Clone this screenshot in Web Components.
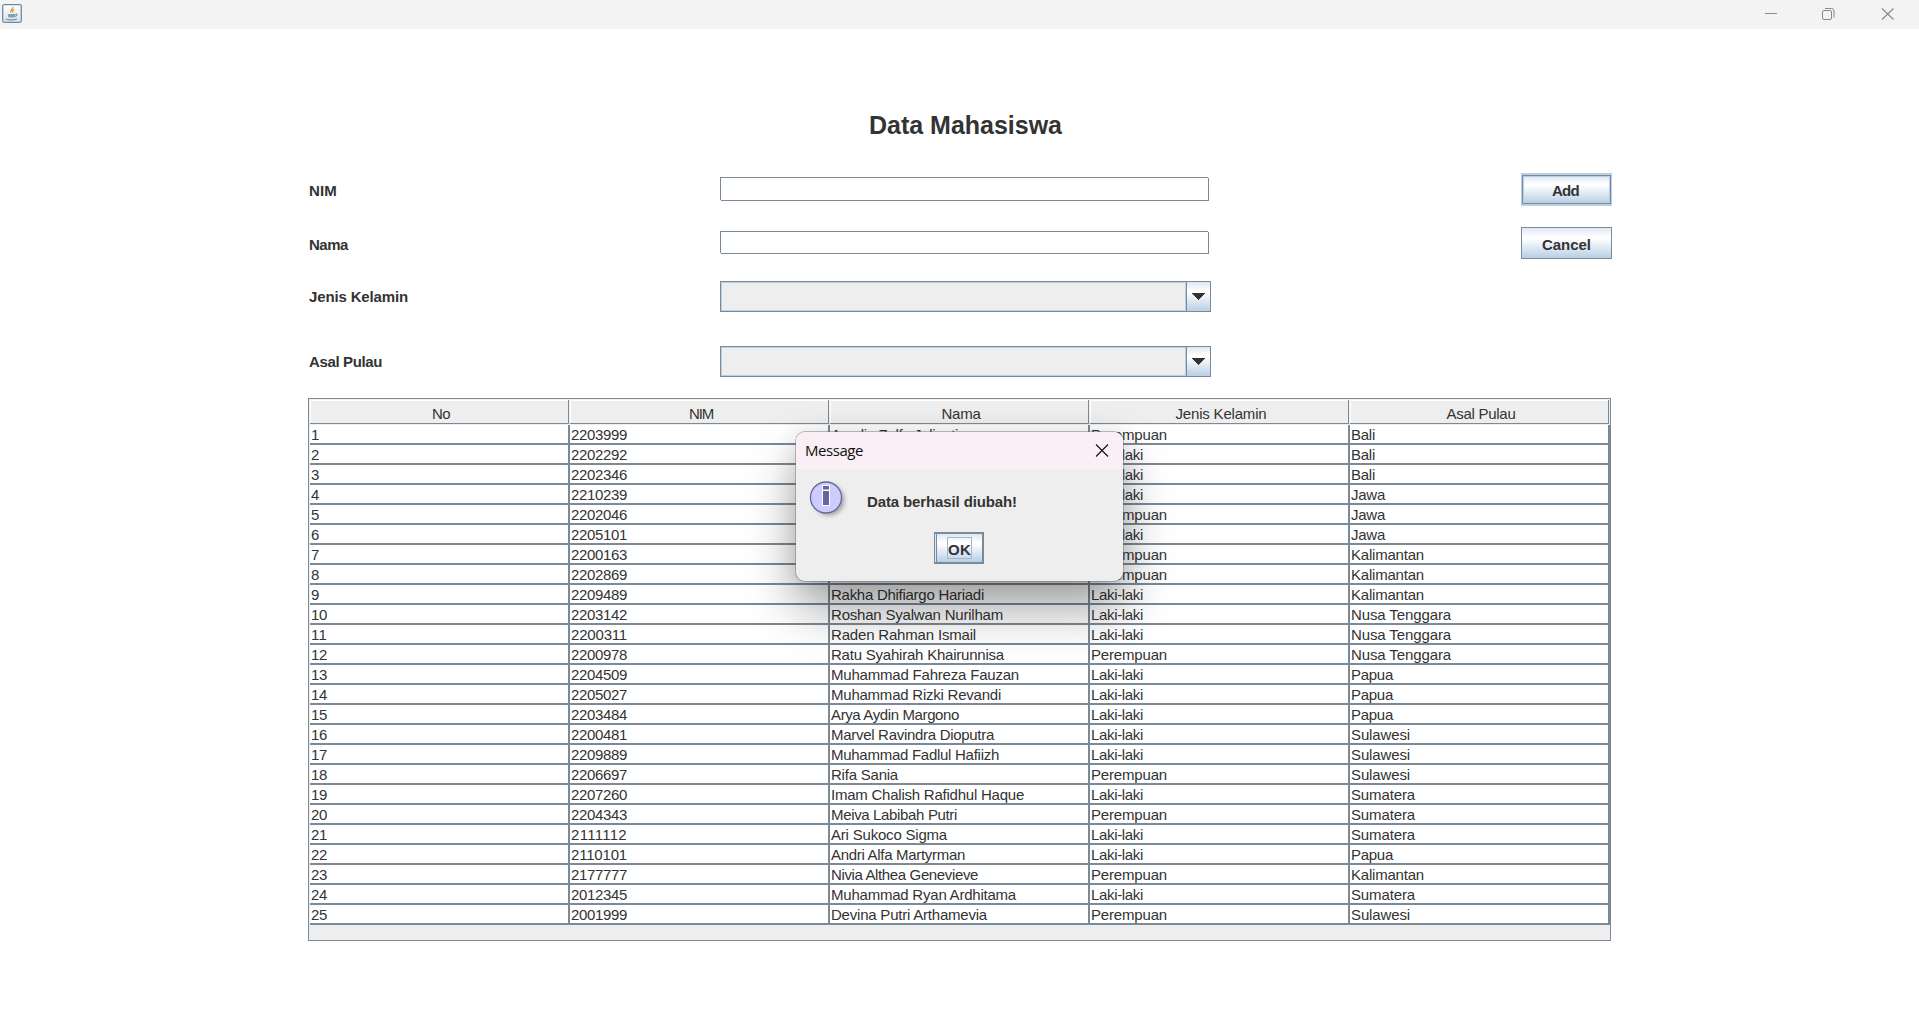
<!DOCTYPE html>
<html lang="id"><head><meta charset="utf-8"><title>Data Mahasiswa</title>
<style>
html,body{margin:0;height:100%;background:#fff;overflow:hidden}
body{font:15px "Liberation Sans",Arial,sans-serif;color:#333}
</style></head><body>
<student-app></student-app>
<script>
// nim | name | name width in px | gender | island
const STUDENTS=`
2203999|Amelia Zulfa Julianti|127|Perempuan|Bali
2202292||0|Laki-laki|Bali
2202346||0|Laki-laki|Bali
2210239||0|Laki-laki|Jawa
2202046||0|Perempuan|Jawa
2205101||0|Laki-laki|Jawa
2200163||0|Perempuan|Kalimantan
2202869||0|Perempuan|Kalimantan
2209489|Rakha Dhifiargo Hariadi|153|Laki-laki|Kalimantan
2203142|Roshan Syalwan Nurilham|172|Laki-laki|Nusa Tenggara
2200311|Raden Rahman Ismail|145|Laki-laki|Nusa Tenggara
2200978|Ratu Syahirah Khairunnisa|173|Perempuan|Nusa Tenggara
2204509|Muhammad Fahreza Fauzan|188|Laki-laki|Papua
2205027|Muhammad Rizki Revandi|170|Laki-laki|Papua
2203484|Arya Aydin Margono|128|Laki-laki|Papua
2200481|Marvel Ravindra Dioputra|163|Laki-laki|Sulawesi
2209889|Muhammad Fadlul Hafiizh|168|Laki-laki|Sulawesi
2206697|Rifa Sania|67|Perempuan|Sulawesi
2207260|Imam Chalish Rafidhul Haque|193|Laki-laki|Sumatera
2204343|Meiva Labibah Putri|126|Perempuan|Sumatera
2111112|Ari Sukoco Sigma|116|Laki-laki|Sumatera
2110101|Andri Alfa Martyrman|134|Laki-laki|Papua
2177777|Nivia Althea Genevieve|147|Perempuan|Kalimantan
2012345|Muhammad Ryan Ardhitama|185|Laki-laki|Sumatera
2001999|Devina Putri Arthamevia|156|Perempuan|Sulawesi`;

const define=(name,html,setup)=>customElements.define(name,class extends HTMLElement{
  connectedCallback(){
    if(this.shadowRoot)return;
    const t=document.createElement('template');t.innerHTML=html;
    const r=this.attachShadow({mode:'open'});r.append(t.content.cloneNode(true));
    if(setup)setup(this,r);
  }
});

define('title-bar',`<style>
:host{display:flex;height:29px;background:#f3f3f3;justify-content:space-between}
svg{display:block}
.c{display:flex}
</style>
<svg width="24" height="29" viewBox="0 0 24 29"><defs><linearGradient id="g" x2="0" y2="1"><stop stop-color="#fff"/><stop offset="1" stop-color="#dfe3e8"/></linearGradient></defs>
<rect x="2.700" y="4.700" width="18.600" height="17.600" rx="1.500" fill="url(#g)" stroke="#6a8ba6" stroke-width="1.300"/>
<path d="M12.700 7c1.200 2-3.400 3-2 5.500M14 9.500c-2 1-1.700 1.600-.8 3" fill="none" stroke="#ee9a4d" stroke-width="1.500"/>
<path d="M7.500 14h8l-1 3.500h-6z" fill="#7f9fba"/><path d="M15.500 14.200c2.500-.5 1.500 2-1 2.300M5.500 19c2.500 1.200 9 1.200 11.500-.3" fill="none" stroke="#7897b2" stroke-width="1.200"/></svg>
<div class="c">
<svg width="59" height="29"><path d="M25 13.500h12" stroke="#888"/></svg>
<svg width="59" height="29" fill="none" stroke="#888"><rect x="23.500" y="10.500" width="9" height="9" rx="1.500"/><path d="M26 8.500h6.500q2.500 0 2.500 2.500v6.500"/></svg>
<svg width="61" height="29"><path d="M24 8.500l11.500 11M35.500 8.500l-11.500 11" stroke="#888" stroke-width="1.100"/></svg>
</div>`);

define('fit-text',`<style>:host{display:inline-block;white-space:pre}</style><span></span>`,(h,r)=>{
  const s=r.querySelector('span');s.textContent=h.getAttribute('text');
  const w=+h.getAttribute('w');
  if(w){const n=s.textContent.length;s.style.letterSpacing=((w-s.getBoundingClientRect().width)/n)+'px';}
});

define('form-label',`<style>:host{display:block;width:411px;font-weight:bold;line-height:18px}</style><slot></slot>`);

define('text-field',`<style>
:host{display:block;box-sizing:border-box;width:489px;height:24px;border:1px solid #7a8a99;
clip-path:polygon(0 0,calc(100% - 1px) 0,calc(100% - 1px) 1px,100% 1px,100% 100%,1px 100%,1px calc(100% - 1px),0 calc(100% - 1px))}
:host([short]){height:23px}
</style>`);

define('combo-box',`<style>
:host{display:flex;box-sizing:border-box;width:491px;height:31px;border:1px solid #7a8a99}
.v{flex:1;border:1px solid #b8cfe5;background:#eee}
.b{box-sizing:border-box;width:24px;border-left:1px solid #7a8a99;background:linear-gradient(#dde8f3,#fff 30%,#fff 35%,#b8cfe5);display:flex}
svg{display:block}
</style><div class="v"></div><div class="b"><svg width="23" height="29" shape-rendering="crispEdges"><path d="M5 11h13l-6.500 7z" fill="#333"/></svg></div>`);

define('swing-button',`<style>
:host{display:flex;box-sizing:border-box;width:91px;height:32px;border:1px solid #7a8a99;background:linear-gradient(#dde8f3,#fff 30%,#fff 35%,#b8cfe5);font-weight:bold;align-items:center;justify-content:center;line-height:18px;padding-top:4px}
:host([hot]){height:33px;border:1px solid #b8cfe5;border-width:2px 1px;background:none;padding:0}
:host([hot]) div{display:flex;width:100%;height:29px;box-sizing:border-box;border:1px solid #7a8a99;box-shadow:inset 0 0 0 1px #b8cfe5;background:linear-gradient(#dde8f3,#fff 30%,#fff 35%,#b8cfe5);align-items:center;justify-content:center;padding-right:2px;padding-top:3px}
:host([focus]){width:50px;border:2px solid #7a8a99;border-left-width:1px;box-shadow:inset 1px 0 #dde8f3,inset 2px 0 #7a8a99;padding:0 0 0 2px}
:host([focus]) div{border:1px solid #a3b8cc;width:23px;height:20px;line-height:24px;text-align:center}
</style><div><slot></slot></div>`);

define('student-table',`<style>
:host{display:block;box-sizing:border-box;width:1303px;height:543px;border:1px solid #7a8a99;background:#eee;padding-left:1px}
.h,.r{display:grid;grid-template-columns:repeat(5,260px)}
.h{height:26px;background:#eee;padding-top:1px;box-sizing:border-box}
.h div{box-sizing:border-box;height:24px;border-right:1px solid #7a8a99;border-bottom:1px solid #7a8a99;box-shadow:inset 1px 1px #fff;margin-right:1px;text-align:center;line-height:27px;padding-left:4px}
.r{height:20px;background:#fff}
.r div{box-sizing:border-box;border-right:2px solid #7a8a99;border-bottom:2px solid #7a8a99;line-height:20px;height:20px;padding-left:1px;overflow:hidden}
</style><div class="h"></div><div class="b"></div>`,(h,r)=>{
  const head=[['No',18],['NIM',24],['Nama',39],['Jenis Kelamin',91],['Asal Pulau',69]];
  r.querySelector('.h').innerHTML=head.map(([t,w])=>`<div><fit-text text="${t}" w="${w}"></fit-text></div>`).join('');
  const rows=STUDENTS.trim().split('\n').map((l,i)=>[String(i+1),...l.split('|')]);
  const widths={'Laki-laki':52,'Perempuan':76,'Bali':24,'Jawa':34,'Kalimantan':73,'Nusa Tenggara':100,'Papua':42,'Sulawesi':59,'Sumatera':64};
  r.querySelector('.b').innerHTML=rows.map(([no,nim,name,w,sex,isle])=>`<div class="r">${
    [[no,no.length*8],[nim,56],[name,w],[sex,widths[sex]],[isle,widths[isle]]].map(([t,w])=>`<div>${t?`<fit-text text="${t}" w="${w}"></fit-text>`:''}</div>`).join('')}</div>`).join('');
});

define('message-dialog',`<style>
:host{display:block;position:absolute;left:796px;top:432px;width:327px;height:149px;box-sizing:border-box;border-radius:9px;background:#eee;overflow:hidden;box-shadow:0 0 0 1px rgba(110,110,110,.45),0 28px 50px rgba(0,0,0,.36),0 2px 24px rgba(0,0,0,.1)}
.t{height:37px;background:#f9eff5;display:flex;justify-content:space-between;color:#111;font:15px/37px "Open Sans","Noto Sans",sans-serif;padding:0 14px 0 9px}
.m{display:flex;height:63px}
.m svg{margin:10px 0 0 12px;flex:none}
.m b{margin:23px 0 0 19px;line-height:20px}
.o{display:flex;padding-left:138px}
.t svg{margin-top:11px}
</style><div class="t"><fit-text text="Message" w="58"></fit-text><svg width="14" height="15"><path d="M1 1.500l12 12M13 1.500l-12 12" stroke="#111" stroke-width="1.100"/></svg></div>
<div class="m"><svg width="40" height="42"><defs><filter id="b" x="-30%" y="-30%" width="170%" height="170%"><feGaussianBlur stdDeviation="2"/></filter></defs><circle cx="21" cy="21" r="15.500" fill="#777" opacity=".6" filter="url(#b)"/><circle cx="18" cy="18.500" r="15.500" fill="#ccf" stroke="#669" stroke-width="1.300"/><rect x="14" y="6" width="8" height="21" fill="#fff"/><path d="M15 7h6v3.500h-6zM15 12h6v14h-6z" fill="#669"/></svg><b><fit-text text="Data berhasil diubah!" w="150"></fit-text></b></div>
<div class="o"><swing-button focus><fit-text text="OK" w="23"></fit-text></swing-button></div>`);

define('student-app',`<style>
:host{display:block}
h1{margin:80px 0 0 869px;font-size:25px;line-height:32px;height:32px}
.f{display:flex;padding-left:309px;align-items:flex-start}
.f swing-button{margin-left:312px}
.a{height:54px;margin-top:32px}.b{height:54px}.d{height:65px}.e{height:52px}
.f form-label{margin-top:9px}
.a text-field,.b text-field{margin-top:4px}
.d form-label,.e form-label{margin-top:7px}
student-table{margin-left:308px}
</style>
<title-bar></title-bar>
<h1><fit-text text="Data Mahasiswa" w="193"></fit-text></h1>
<div class="f a"><form-label><fit-text text="NIM" w="28"></fit-text></form-label><text-field></text-field><swing-button hot><fit-text text="Add" w="27"></fit-text></swing-button></div>
<div class="f b"><form-label><fit-text text="Nama" w="39"></fit-text></form-label><text-field short></text-field><swing-button><fit-text text="Cancel" w="49"></fit-text></swing-button></div>
<div class="f d"><form-label><fit-text text="Jenis Kelamin" w="99"></fit-text></form-label><combo-box></combo-box></div>
<div class="f e"><form-label><fit-text text="Asal Pulau" w="73"></fit-text></form-label><combo-box></combo-box></div>
<student-table></student-table>
<message-dialog></message-dialog>`);
</script>
</body></html>
